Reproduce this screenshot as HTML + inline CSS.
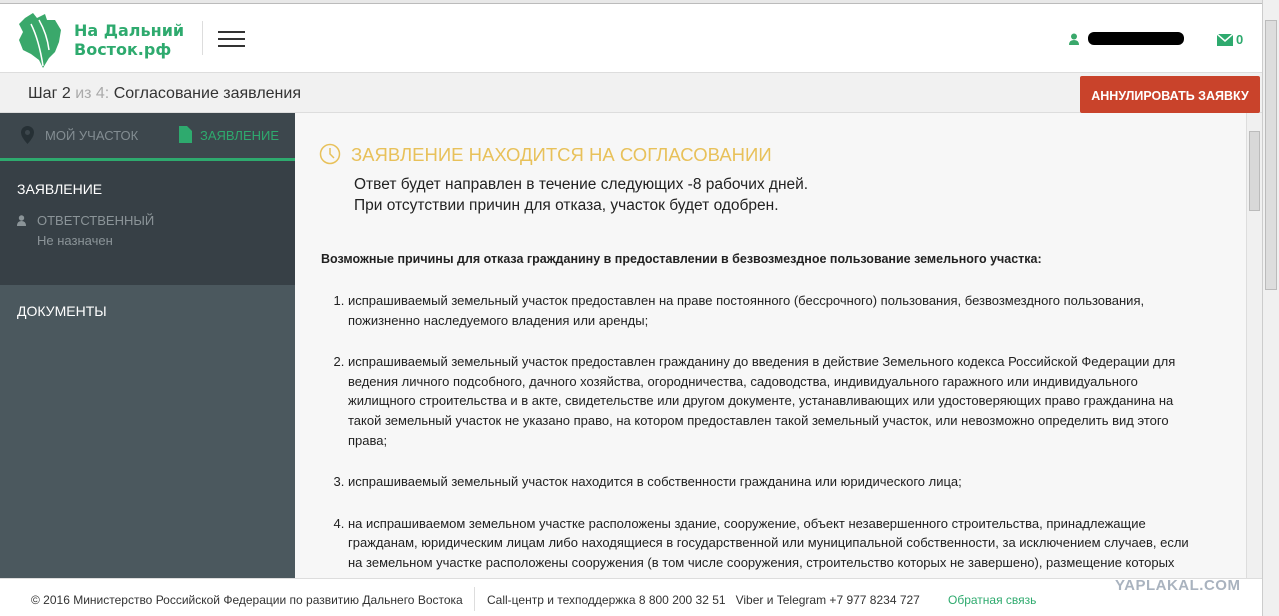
<!DOCTYPE html>
<html><head><meta charset="utf-8"><style>
*{margin:0;padding:0;box-sizing:border-box}
body{width:1279px;height:616px;overflow:hidden;font-family:"Liberation Sans",sans-serif;background:#fff;position:relative}
.abs{position:absolute;white-space:nowrap}
.top{left:0;top:0;width:1279px;height:4px;background:#e8e8e8;border-bottom:1px solid #bbb}
.hdr{left:0;top:4px;width:1262px;height:69px;background:#fff;border-bottom:1px solid #ddd}
.step{left:0;top:73px;width:1262px;height:40px;background:#f1f1f1;border-bottom:1px solid #ddd}
.side{left:0;top:113px;width:295px;height:465px;background:#4b585e}
.main{left:295px;top:113px;width:951px;height:465px;background:#f7f7f7;overflow:hidden}
ol.lst{font-size:13px;color:#222;line-height:19.6px;white-space:normal}
ol.lst li{margin-bottom:22px;white-space:normal}
.foot{left:0;top:578px;width:1262px;height:38px;background:#fff;border-top:1px solid #ddd;font-family:"Liberation Sans",sans-serif;font-size:12px;color:#333}
</style></head><body>
<div class="abs top"></div>
<div class="abs hdr">
 <svg class="abs" style="left:17px;top:6px" width="48" height="60" viewBox="0 0 48 60"><path d="M8 8 L16 3 L20 8 L28 4 L30 10 L38 10 L44 20 L42 32 L38 42 L32 48 L26 58 L22 50 L14 44 L6 40 L2 30 L6 22 L2 14 Z" fill="#3aa86b"/><path d="M14 14 Q22 30 26 56 M22 10 Q30 24 32 40" stroke="#fff" stroke-width="1.5" fill="none"/></svg>
 <div class="abs" style="left:74px;top:17px;font-family:'DejaVu Sans',sans-serif;font-weight:bold;font-size:16px;line-height:19px;color:#2eaa6e">На Дальний<br>Восток.рф</div>
 <div class="abs" style="left:202px;top:17px;width:1px;height:34px;background:#ddd"></div>
 <div class="abs" style="left:218px;top:27px;width:27px;height:2px;background:#333;box-shadow:0 7px 0 #333,0 14px 0 #333"></div>
 <svg class="abs" style="left:1069px;top:29px" width="10" height="12"><circle cx="5" cy="3.5" r="3" fill="#3aa86b"/><path d="M0 12 Q0 7 5 7 Q10 7 10 12Z" fill="#3aa86b"/></svg>
 <div class="abs" style="left:1088px;top:28px;width:96px;height:13px;background:#000;border-radius:6px"></div>
 <svg class="abs" style="left:1217px;top:30px" width="16" height="12"><rect width="16" height="12" fill="#2eaa6e"/><path d="M0 0 L8 7 L16 0" stroke="#fff" stroke-width="1.5" fill="none"/></svg>
 <div class="abs" style="left:1236px;top:28px;font-weight:bold;font-size:13px;color:#2eaa6e">0</div>
</div>
<div class="abs step"><div class="abs" style="left:28px;top:12px;font-size:16px;color:#333">Шаг 2 <span style="color:#aaa">из 4:</span> Согласование заявления</div></div>
<div class="abs" style="left:1080px;top:76px;width:180px;height:37px;background:#c9432b;border-radius:2px;color:#fff;font-weight:bold;font-size:12.5px;text-align:center;line-height:40px">АННУЛИРОВАТЬ ЗАЯВКУ</div>
<div class="abs side">
 <div class="abs" style="left:0;top:0;width:295px;height:48px;background:#3d474d;border-bottom:3px solid #2eaa6e"></div>
 <svg class="abs" style="left:21px;top:13px" width="13" height="18"><path d="M6.5 0 A6.5 6.5 0 0 1 13 6.5 Q13 11 6.5 18 Q0 11 0 6.5 A6.5 6.5 0 0 1 6.5 0Z" fill="#263035"/><circle cx="6.5" cy="6.5" r="2.5" fill="#3d474d"/></svg>
 <div class="abs" style="left:45px;top:15px;font-size:13px;color:#838d92">МОЙ УЧАСТОК</div>
 <svg class="abs" style="left:179px;top:13px" width="13" height="17"><path d="M0 0 H8 L13 5 V17 H0Z" fill="#2eaa6e"/></svg>
 <div class="abs" style="left:200px;top:15px;font-size:13px;color:#2eaa6e">ЗАЯВЛЕНИЕ</div>
 <div class="abs" style="left:289px;top:6px;width:22px;height:36px;background:#3d474d;border-radius:0 4px 4px 0;color:#2eaa6e;font-size:14px;line-height:34px;text-align:center">‹</div>
 <div class="abs" style="left:0;top:48px;width:295px;height:124px;background:#374046"></div>
 <div class="abs" style="left:17px;top:68px;font-size:14px;color:#fff">ЗАЯВЛЕНИЕ</div>
 <svg class="abs" style="left:17px;top:102px" width="9" height="11"><circle cx="4.5" cy="3" r="2.7" fill="#8b9498"/><path d="M0 11 Q0 6 4.5 6 Q9 6 9 11Z" fill="#8b9498"/></svg>
 <div class="abs" style="left:37px;top:100px;font-size:13px;color:#8b9498">ОТВЕТСТВЕННЫЙ</div>
 <div class="abs" style="left:37px;top:120px;font-size:13px;color:#8b9498">Не назначен</div>
 <div class="abs" style="left:17px;top:190px;font-size:14px;color:#fff">ДОКУМЕНТЫ</div>
</div>
<div class="abs main">
 <svg class="abs" style="left:24px;top:30px" width="22" height="22"><circle cx="11" cy="11" r="9.5" stroke="#e8c15a" stroke-width="1.5" fill="none"/><path d="M11 5 V11 L15 15" stroke="#e8c15a" stroke-width="1.5" fill="none"/></svg>
 <div class="abs" style="left:56px;top:31px;font-size:18.5px;color:#e8c15a">ЗАЯВЛЕНИЕ НАХОДИТСЯ НА СОГЛАСОВАНИИ</div>
 <div class="abs" style="left:59px;top:61px;font-size:15.5px;line-height:21px;color:#222">Ответ будет направлен в течение следующих -8 рабочих дней.<br>При отсутствии причин для отказа, участок будет одобрен.</div>
 <div class="abs" style="left:26px;top:139px;font-size:12.5px;font-weight:bold;color:#222">Возможные причины для отказа гражданину в предоставлении в безвозмездное пользование земельного участка:</div>
 <ol class="abs lst" style="left:53px;top:178px;width:842px">
  <li>испрашиваемый земельный участок предоставлен на праве постоянного (бессрочного) пользования, безвозмездного пользования, пожизненно наследуемого владения или аренды;</li>
  <li>испрашиваемый земельный участок предоставлен гражданину до введения в действие Земельного кодекса Российской Федерации для ведения личного подсобного, дачного хозяйства, огородничества, садоводства, индивидуального гаражного или индивидуального жилищного строительства и в акте, свидетельстве или другом документе, устанавливающих или удостоверяющих право гражданина на такой земельный участок не указано право, на котором предоставлен такой земельный участок, или невозможно определить вид этого права;</li>
  <li>испрашиваемый земельный участок находится в собственности гражданина или юридического лица;</li>
  <li>на испрашиваемом земельном участке расположены здание, сооружение, объект незавершенного строительства, принадлежащие гражданам, юридическим лицам либо находящиеся в государственной или муниципальной собственности, за исключением случаев, если на земельном участке расположены сооружения (в том числе сооружения, строительство которых не завершено), размещение которых</li>
 </ol>
</div>
<div class="abs" style="left:1246px;top:113px;width:16px;height:465px;background:#f0f0f0;border-left:1px solid #ddd"><div class="abs" style="left:2px;top:18px;width:11px;height:80px;background:#d8d8d8;border:1px solid #bbb"></div></div>
<div class="abs" style="left:1262px;top:0;width:17px;height:616px;background:#f0f0f0;border-left:1px solid #ccc"><div class="abs" style="left:2px;top:20px;width:12px;height:270px;background:#ddd;border:1px solid #bbb"></div></div>
<div class="abs foot">
 <div class="abs" style="left:31px;top:14px">© 2016 Министерство Российской Федерации по развитию Дальнего Востока</div>
 <div class="abs" style="left:474px;top:8px;width:1px;height:24px;background:#ddd"></div>
 <div class="abs" style="left:487px;top:14px">Call-центр и техподдержка 8 800 200 32 51 &nbsp; Viber и Telegram +7 977 8234 727</div>
 <div class="abs" style="left:948px;top:14px;color:#2eaa6e">Обратная связь</div>
 <div class="abs" style="left:1115px;top:-2px;font-weight:bold;font-size:15px;color:#a9b3bf;letter-spacing:0.5px">YAPLAKAL.COM</div>
</div>
</body></html>
